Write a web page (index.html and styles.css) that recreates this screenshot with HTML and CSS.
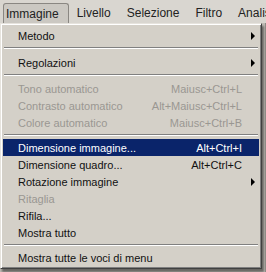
FILE: index.html
```html
<!DOCTYPE html>
<html lang="it">
<head>
    <meta charset="UTF-8">
    <title>Menu Immagine</title>
    <link rel="stylesheet" href="styles.css">
</head>
<body>
    <div class="menubar">
        <span class="mb-item active">Immagine</span>
        <span class="mb-item">Livello</span>
        <span class="mb-item">Selezione</span>
        <span class="mb-item">Filtro</span>
        <span class="mb-item">Analisi</span>
    </div>

    <div class="workspace">
        <div class="menu">
            <div class="item"><span class="label">Metodo</span><span class="key"></span><span class="sub"></span></div>
            <div class="sep"></div>
            <div class="item"><span class="label">Regolazioni</span><span class="key"></span><span class="sub"></span></div>
            <div class="sep mid"></div>
            <div class="item disabled"><span class="label">Tono automatico</span><span class="key">Maiusc+Ctrl+L</span><span class="nosub"></span></div>
            <div class="item disabled"><span class="label">Contrasto automatico</span><span class="key">Alt+Maiusc+Ctrl+L</span><span class="nosub"></span></div>
            <div class="item disabled"><span class="label">Colore automatico</span><span class="key">Maiusc+Ctrl+B</span><span class="nosub"></span></div>
            <div class="sep short"></div>
            <div class="item selected"><span class="label">Dimensione immagine...</span><span class="key">Alt+Ctrl+I</span><span class="nosub"></span></div>
            <div class="item"><span class="label">Dimensione quadro...</span><span class="key">Alt+Ctrl+C</span><span class="nosub"></span></div>
            <div class="item"><span class="label">Rotazione immagine</span><span class="key"></span><span class="sub"></span></div>
            <div class="item disabled"><span class="label">Ritaglia</span><span class="key"></span><span class="nosub"></span></div>
            <div class="item"><span class="label">Rifila...</span><span class="key"></span><span class="nosub"></span></div>
            <div class="item"><span class="label">Mostra tutto</span><span class="key"></span><span class="nosub"></span></div>
            <div class="sep short"></div>
            <div class="item"><span class="label">Mostra tutte le voci di menu</span><span class="key"></span><span class="nosub"></span></div>
        </div>
        <div class="side"></div>
    </div>
</body>
</html>
```

FILE: styles.css
```css
body { margin: 0; width: 266px; height: 272px; overflow: hidden; background: #bdbab4; font-family: "Liberation Sans", Arial, sans-serif; }

.menubar { height: 23px; display: flex; align-items: flex-end; background: #d9d6d0; padding-left: 3px; white-space: nowrap; overflow: hidden; }
.mb-item { font-size: 12px; color: #222; padding: 0 0 2px; margin-right: 16px; line-height: 15px; }
.mb-item.active { height: 15px; padding: 3px 9px 1px 2px; margin-right: 8px; border: 1px solid #8a8782; border-bottom: none; border-radius: 3px 3px 0 0; background: #cbc8c2; }

.workspace { display: flex; height: 249px; }
.menu { width: 256px; height: 240px; padding: 3px 2px 1px; background: #d4d0c8; border: 1px solid; border-color: #e6e3dd #404040 #404040 #e6e3dd; box-shadow: inset 1px 1px 0 #ffffff, inset -1px -1px 0 #808080, 2px 3px 2px rgba(0, 0, 0, 0.45); font-size: 11px; }
.side { flex: 1; margin-left: 3px; border-left: 1px solid #8d8a85; background: #d6d3cd; }

.item { display: flex; align-items: center; height: 17px; padding-left: 15px; color: #111; white-space: nowrap; }
.item .label { flex: 1; }
.item .key { text-align: right; }
.item .sub, .item .nosub { width: 17px; height: 17px; display: flex; align-items: center; justify-content: center; }
.item .sub::after { content: ""; border-left: 4px solid #000; border-top: 4px solid transparent; border-bottom: 4px solid transparent; margin-left: 5px; }
.item.disabled { color: #9a9792; }
.item.selected { background: #0a246a; color: #fff; }

.sep { height: 1px; margin: 3px 1px 5px; background: #808080; border-bottom: 1px solid #fff; }
.sep.mid { margin: 3px 1px 4px; }
.sep.short { margin: 3px 1px 3px; }
```
